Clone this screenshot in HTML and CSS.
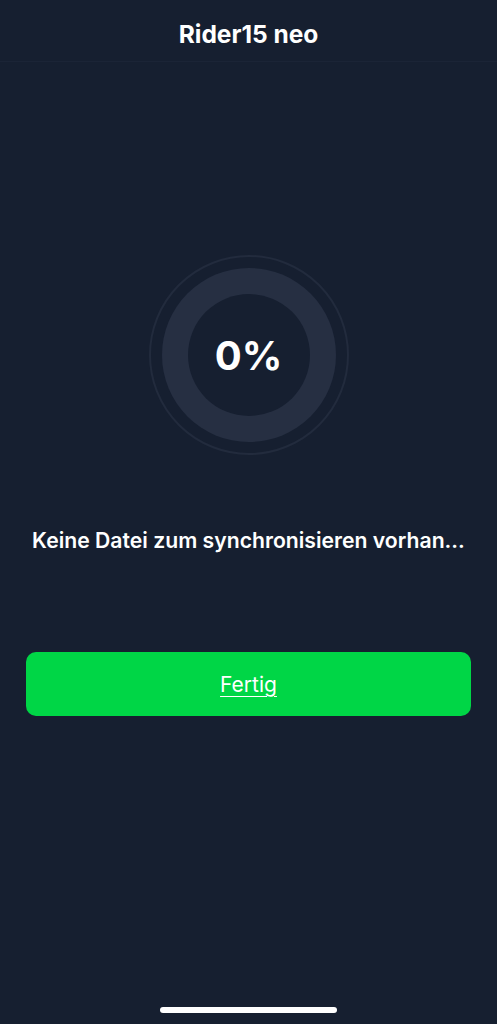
FILE: index.html
```
<!DOCTYPE html>
<html lang="de">
<head>
	<meta charset="utf-8">
	<title>Rider15 neo</title>
	<link rel="stylesheet" href="styles.css">
</head>
<body>
	<div class="page">
		<div class="topBar">
			<div class="title">Rider15 neo</div>
		</div>
		<div class="syncBox">
			<div class="ringOuter">
				<div class="ringTrack">
					<div class="ringCenter">0%</div>
				</div>
			</div>
			<div class="msg">Keine Datei zum synchronisieren vorhan...</div>
			<div class="btnDone">Fertig</div>
		</div>
		<div class="homeBar"></div>
	</div>
</body>
</html>
```
FILE: styles.css
```
*, *:after, *:before {
	box-sizing: border-box;
}
html, body {
	margin: 0;
	background: #161f30;
	font-family: Inter, "Liberation Sans", sans-serif;
	color: #fff;
}
.page {
	height: 100vh;
	display: flex;
	flex-direction: column;
}
.topBar {
	height: 62px;
	display: flex;
	align-items: center;
	justify-content: center;
	border-bottom: 1px solid #1b2436;
	padding-top: 6px;
}
.title {
	font-size: 24.5px;
	font-weight: 700;
}
.syncBox {
	display: flex;
	flex-direction: column;
	align-items: center;
	padding-top: 193px;
}
.ringOuter {
	width: 200px;
	height: 200px;
	border-radius: 50%;
	border: 2px solid #222b3d;
	padding: 11px;
}
.ringTrack {
	width: 174px;
	height: 174px;
	border-radius: 50%;
	background: #262f42;
	padding: 26px;
}
.ringCenter {
	width: 122px;
	height: 122px;
	border-radius: 50%;
	background: #161f30;
	display: flex;
	align-items: center;
	justify-content: center;
	font-size: 40px;
	font-weight: 700;
}
.msg {
	margin-top: 73px;
	font-size: 21.2px;
	line-height: 24px;
	font-weight: 600;
	white-space: nowrap;
}
.btnDone {
	align-self: stretch;
	margin: 100px 26px 0 26px;
	height: 64px;
	border-radius: 10px;
	background: #00d646;
	display: flex;
	align-items: center;
	justify-content: center;
	font-size: 21px;
	text-decoration: underline;
	text-underline-offset: 4px;
	text-decoration-thickness: 1px;
	cursor: pointer;
}
.homeBar {
	margin: auto auto 11px auto;
	width: 177px;
	height: 6px;
	border-radius: 3px;
	background: #fff;
}
```
